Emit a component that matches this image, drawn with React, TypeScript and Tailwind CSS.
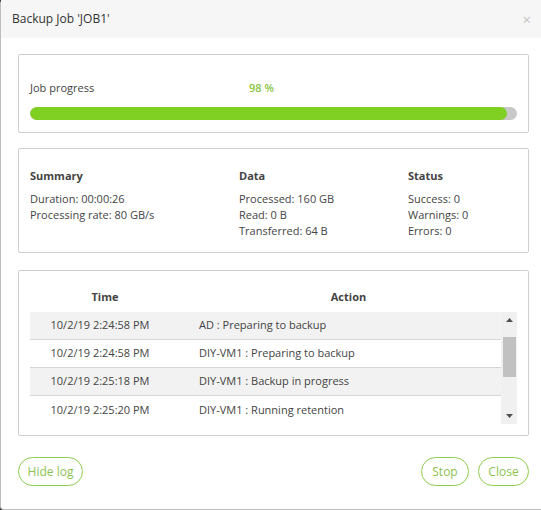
import React from 'react';

const font = { fontFamily: '"Open Sans", "Noto Sans", sans-serif' };

const logRows = [
  { time: '10/2/19 2:24:58 PM', action: 'AD : Preparing to backup' },
  { time: '10/2/19 2:24:58 PM', action: 'DIY-VM1 : Preparing to backup' },
  { time: '10/2/19 2:25:18 PM', action: 'DIY-VM1 : Backup in progress' },
  { time: '10/2/19 2:25:20 PM', action: 'DIY-VM1 : Running retention' },
];

const Panel: React.FC<{ className?: string; children: React.ReactNode }> = ({ className = '', children }) => (
  <div className={`border border-[#cfcfcf] rounded-[2px] bg-white ${className}`}>{children}</div>
);

const PillButton: React.FC<{ label: string; className?: string }> = ({ label, className = '' }) => (
  <button
    className={`h-[29px] rounded-full border border-[#8ccd4c] text-[#8cc34f] text-[12px] bg-white ${className}`}
  >
    {label}
  </button>
);

export default function App() {
  return (
    <div className="w-[541px] h-[510px] bg-[#3a3a3a] overflow-hidden text-[#444]" style={font}>
      <div className="w-[541px] h-[510px] bg-white border-l border-b border-[#bdbdbd] rounded-bl-[4px] rounded-tl-[4px] flex flex-col">
        {/* Header */}
        <div className="h-[38px] bg-[#f6f6f6] flex items-center justify-between pl-[11px] pr-[10px] shrink-0">
          <span className="text-[12px] text-[#333]">Backup Job 'JOB1'</span>
          <span className="text-[15px] text-[#c4c4c4] leading-none">×</span>
        </div>

        <div className="pl-[17px] pr-[12px] pt-[16px] flex flex-col">
          {/* Progress */}
          <Panel className="h-[79px] px-[11px] pt-[25px]">
            <div className="flex items-center text-[11px] h-[16px]">
              <span className="w-[219px] text-[#444]">Job progress</span>
              <span className="text-[#86c640] font-semibold">98 %</span>
            </div>
            <div className="mt-[11px] h-[13px] rounded-full bg-[#c8c8c8] overflow-hidden">
              <div className="h-full rounded-full bg-[#7fd023]" style={{ width: '97.9%' }} />
            </div>
          </Panel>

          {/* Summary */}
          <Panel className="mt-[15px] h-[105px] px-[11px] pt-[19px] text-[11px] leading-[16px]">
            <div className="flex">
              <div className="w-[209px]">
                <div className="font-bold mb-[7px]">Summary</div>
                <div>Duration: 00:00:26</div>
                <div>Processing rate: 80 GB/s</div>
              </div>
              <div className="w-[169px]">
                <div className="font-bold mb-[7px]">Data</div>
                <div>Processed: 160 GB</div>
                <div>Read: 0 B</div>
                <div>Transferred: 64 B</div>
              </div>
              <div>
                <div className="font-bold mb-[7px]">Status</div>
                <div>Success: 0</div>
                <div>Warnings: 0</div>
                <div>Errors: 0</div>
              </div>
            </div>
          </Panel>

          {/* Log */}
          <Panel className="mt-[17px] h-[166px] px-[11px] pt-[12px]">
            <div className="flex h-[29px] items-center text-[11px] font-bold">
              <div className="w-[150px] text-center">Time</div>
              <div className="flex-1 text-center">Action</div>
            </div>
            <div className="flex">
              <div className="flex-1 text-[11px]">
                {logRows.map((row, i) => (
                  <div
                    key={i}
                    className={`flex items-center h-[28px] border-b border-[#d6d6d6] ${i % 2 === 0 ? 'bg-[#f2f2f2]' : 'bg-white'} ${i === logRows.length - 1 ? 'border-b-0' : ''}`}
                  >
                    <div className="w-[140px] text-center">{row.time}</div>
                    <div className="pl-[29px]">{row.action}</div>
                  </div>
                ))}
              </div>
              {/* Scrollbar */}
              <div className="w-[16px] h-[112px] bg-[#f0f0f0] flex flex-col items-center">
                <div className="h-[16px] flex items-center justify-center">
                  <svg width="7" height="4" viewBox="0 0 7 4"><path d="M0 4 L3.5 0 L7 4 Z" fill="#505050" /></svg>
                </div>
                <div className="mt-[9px] w-[13px] h-[40px] bg-[#c1c1c1]" />
                <div className="flex-1" />
                <div className="h-[16px] flex items-center justify-center">
                  <svg width="7" height="4" viewBox="0 0 7 4"><path d="M0 0 L3.5 4 L7 0 Z" fill="#505050" /></svg>
                </div>
              </div>
            </div>
          </Panel>

          {/* Buttons */}
          <div className="mt-[21px] flex items-center">
            <PillButton label="Hide log" className="w-[65px]" />
            <div className="flex-1" />
            <PillButton label="Stop" className="w-[48px]" />
            <PillButton label="Close" className="w-[51px] ml-[9px]" />
          </div>
        </div>
      </div>
    </div>
  );
}
